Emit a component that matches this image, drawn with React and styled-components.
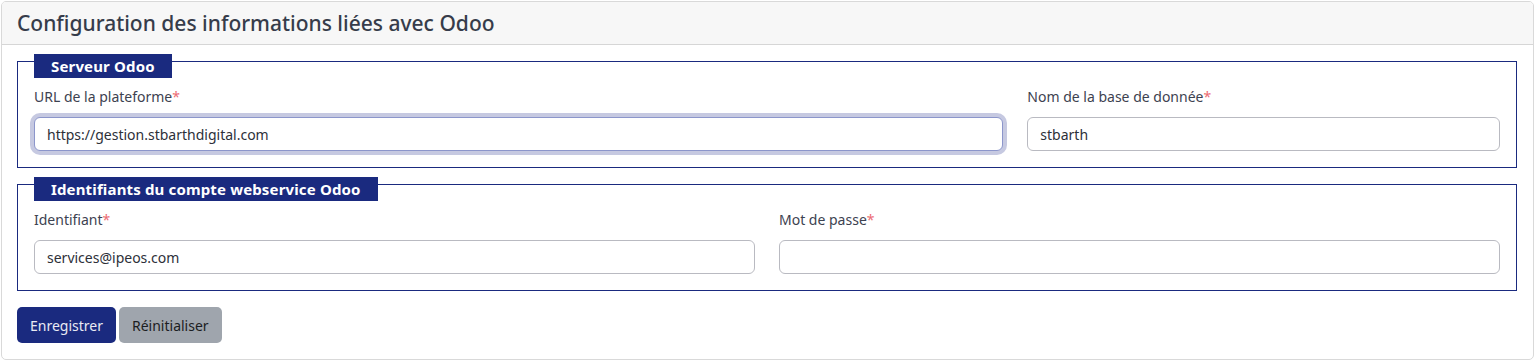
import React from "react";
import styled, { createGlobalStyle } from "styled-components";

const Global = createGlobalStyle`
  html, body { margin: 0; padding: 0; background: #ffffff; }
  body { font-family: "Noto Sans", "Open Sans", sans-serif; }
  * { box-sizing: border-box; }
`;

const Page = styled.div`
  padding: 1px 1px 0 1px;
`;

const Card = styled.section`
  border: 1px solid #d9d9d9;
  border-radius: 5px;
  background: #fff;
  height: 359px;
  overflow: hidden;
`;

const CardHeader = styled.header`
  background: #f7f7f7;
  border-bottom: 1px solid #d6d6d6;
  height: 43px;
  display: flex;
  align-items: center;
  padding: 0 15px;
`;

const Title = styled.h1`
  margin: 0;
  font-size: 21px;
  font-weight: 500;
  color: #363c4a;
`;

const CardBody = styled.div`
  padding: 4px 16px 0 15px;
  display: flex;
  flex-direction: column;
`;

const Fieldset = styled.fieldset`
  border: 1px solid #1a2a7f;
  margin: 0 0 4px 0;
  padding: 0 16px 16px 16px;
  min-width: 0;
`;

const Legend = styled.legend`
  position: relative;
  top: 5px;
  background: #1a2a7f;
  color: #fff;
  font-weight: 700;
  font-size: 15px;
  letter-spacing: 0.15px;
  line-height: 24px;
  padding: 0 17px;
  margin-left: 0;
`;

const Row = styled.div`
  display: flex;
  margin: 0 -12px;
`;

const Col = styled.div`
  flex: 0 0 ${(p) => p.$span}%;
  max-width: ${(p) => p.$span}%;
  padding: 0 12px;
`;

const Label = styled.label`
  display: block;
  font-size: 14px;
  color: #3d4250;
  line-height: 20px;
  margin: 14px 0 10px 0;
`;

const Star = styled.span`
  color: #ec6b72;
`;

const Input = styled.input`
  display: block;
  width: 100%;
  height: 34px;
  border: 1px solid ${(p) => (p.$focused ? "#8c96cb" : "#b9bac1")};
  border-radius: 6px;
  padding: 0 12px;
  font-family: inherit;
  font-size: 14px;
  color: #2d3039;
  background: #fff;
  outline: none;
  box-shadow: ${(p) => (p.$focused ? "0 0 0 4px #c6c9e1" : "none")};
`;

const Actions = styled.div`
  display: flex;
  gap: 3px;
  margin-top: 12px;
`;

const Button = styled.button`
  height: 36px;
  border: none;
  border-radius: 5px;
  padding: 0 13px;
  font-family: inherit;
  font-size: 14px;
  background: ${(p) => (p.$variant === "primary" ? "#1a2a7f" : "#9fa5ad")};
  color: ${(p) => (p.$variant === "primary" ? "#e9eaf3" : "#1c1d22")};
  cursor: pointer;
`;

function Field({ label, value, span, focused }) {
  return (
    <Col $span={span}>
      <Label>
        {label}
        <Star>*</Star>
      </Label>
      <Input defaultValue={value} $focused={focused} />
    </Col>
  );
}

export default function App() {
  return (
    <Page>
      <Global />
      <Card>
        <CardHeader>
          <Title>Configuration des informations liées avec Odoo</Title>
        </CardHeader>
        <CardBody>
          <Fieldset>
            <Legend>Serveur Odoo</Legend>
            <Row>
              <Field
                label="URL de la plateforme"
                value="https://gestion.stbarthdigital.com"
                span={66.6667}
                focused
              />
              <Field label="Nom de la base de donnée" value="stbarth" span={33.3333} />
            </Row>
          </Fieldset>
          <Fieldset>
            <Legend>Identifiants du compte webservice Odoo</Legend>
            <Row>
              <Field label="Identifiant" value="services@ipeos.com" span={50} />
              <Field label="Mot de passe" value="" span={50} />
            </Row>
          </Fieldset>
          <Actions>
            <Button $variant="primary">Enregistrer</Button>
            <Button $variant="secondary">Réinitialiser</Button>
          </Actions>
        </CardBody>
      </Card>
    </Page>
  );
}
